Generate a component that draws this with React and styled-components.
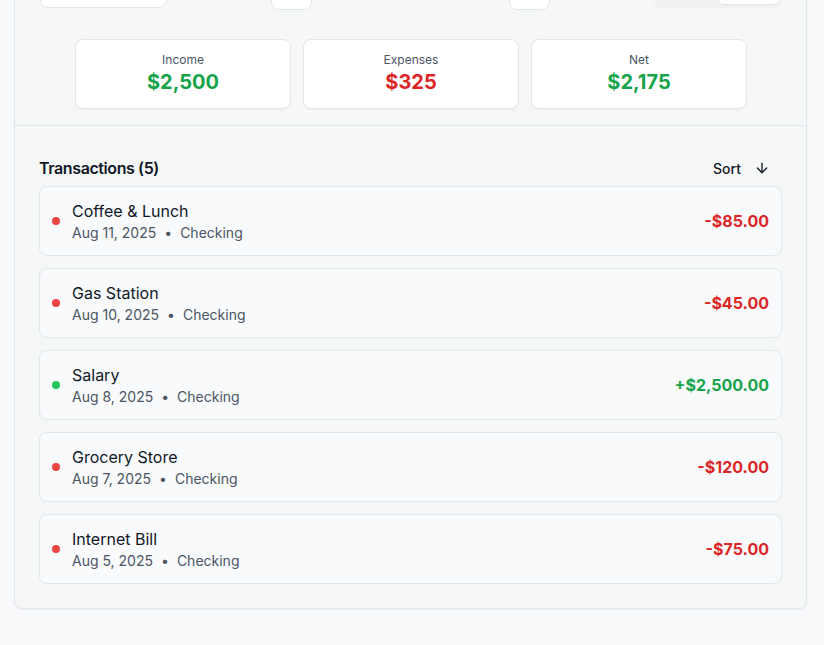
import React from "react";
import styled, { createGlobalStyle } from "styled-components";
import { ArrowDown, ChevronLeft, ChevronRight, ChevronDown } from "lucide-react";

const Global = createGlobalStyle`
  html, body { margin: 0; padding: 0; background: #f8f9fb; }
  body { font-family: Inter, "Noto Sans", sans-serif; color: #111827; }
  * { box-sizing: border-box; }
`;

const Page = styled.div`
  padding: 0 17px 40px 14px;
  margin-top: -55px;
`;

const Card = styled.div`
  background: #f6f7f7;
  border: 1px solid #e2e6ee;
  border-radius: 8px;
  box-shadow: 0 1px 2px rgba(15, 23, 42, 0.05);
`;

const Header = styled.div`
  padding: 24px 24px 16px 25px;
  border-bottom: 1px solid #e2e6ee;
`;

const Toolbar = styled.div`
  display: flex;
  align-items: center;
  justify-content: space-between;
  height: 40px;
`;

const Select = styled.div`
  width: 127px;
  height: 36px;
  background: #fff;
  border: 1px solid #e2e6ee;
  border-radius: 8px;
  display: flex;
  align-items: center;
  justify-content: flex-end;
  padding: 0 10px;
`;

const Nav = styled.div`
  display: flex;
  align-items: center;
  gap: 12px;
`;

const IconButton = styled.button`
  width: 41px;
  height: 40px;
  background: #fff;
  border: 1px solid #e2e6ee;
  border-radius: 8px;
  display: flex;
  align-items: center;
  justify-content: center;
  color: #111827;
  padding: 0;
`;

const MonthLabel = styled.div`
  width: 173px;
  text-align: center;
  font-size: 16px;
  line-height: 24px;
  font-weight: 600;
`;

const Segmented = styled.div`
  display: flex;
  height: 36px;
  padding: 4px 3px;
  background: #f0f1f3;
  border-radius: 8px;
`;

const Segment = styled.div`
  width: 61px;
  border-radius: 6px;
  background: ${(p) => (p.$active ? "#fff" : "transparent")};
  box-shadow: ${(p) => (p.$active ? "0 1px 2px rgba(0,0,0,0.06)" : "none")};
`;

const Stats = styled.div`
  display: grid;
  grid-template-columns: repeat(3, 1fr);
  gap: 12px;
  max-width: 672px;
  margin: 29px auto 0;
`;

const StatCard = styled.div`
  background: #fff;
  border: 1px solid #e5e7eb;
  border-radius: 8px;
  padding: 12px;
  text-align: center;
  box-shadow: 0 1px 2px rgba(15, 23, 42, 0.04);
`;

const StatLabel = styled.div`
  font-size: 12px;
  line-height: 16px;
  color: #4b5563;
`;

const StatValue = styled.div`
  font-size: 20px;
  line-height: 28px;
  font-weight: 700;
  color: ${(p) => p.$color};
`;

const Body = styled.div`
  padding: 24px;
`;

const ListHeader = styled.div`
  display: flex;
  align-items: center;
  justify-content: space-between;
  height: 36px;
`;

const Title = styled.h2`
  margin: 0;
  font-size: 16px;
  font-weight: 600;
  letter-spacing: -0.4px;
  color: #111827;
`;

const SortButton = styled.button`
  display: flex;
  align-items: center;
  gap: 13px;
  background: transparent;
  border: none;
  padding: 0 12px;
  height: 32px;
  font-family: inherit;
  font-size: 14px;
  font-weight: 500;
  color: #111827;
`;

const List = styled.div`
  display: flex;
  flex-direction: column;
  gap: 12px;
`;

const Row = styled.div`
  display: flex;
  align-items: center;
  gap: 12px;
  padding: 12px;
  background: #f8fafc;
  border: 1px solid #e2e6ee;
  border-radius: 8px;
`;

const Dot = styled.span`
  width: 8px;
  height: 8px;
  border-radius: 50%;
  background: ${(p) => p.$color};
  flex: none;
`;

const Info = styled.div`
  flex: 1;
  min-width: 0;
`;

const Name = styled.div`
  font-size: 16px;
  line-height: 24px;
  color: #111827;
`;

const Meta = styled.div`
  display: flex;
  gap: 8px;
  font-size: 14px;
  line-height: 20px;
  color: #4b5563;
`;

const Amount = styled.div`
  font-size: 16px;
  font-weight: 700;
  color: ${(p) => p.$color};
`;

const GREEN = "#16a34a";
const RED = "#dc2626";

const transactions = [
  { name: "Coffee & Lunch", date: "Aug 11, 2025", amount: "-$85.00", income: false },
  { name: "Gas Station", date: "Aug 10, 2025", amount: "-$45.00", income: false },
  { name: "Salary", date: "Aug 8, 2025", amount: "+$2,500.00", income: true },
  { name: "Grocery Store", date: "Aug 7, 2025", amount: "-$120.00", income: false },
  { name: "Internet Bill", date: "Aug 5, 2025", amount: "-$75.00", income: false },
];

export default function App() {
  return (
    <>
      <Global />
      <Page>
        <Card>
          <Header>
            <Toolbar>
              <Select>
                <ChevronDown size={16} color="#6b7280" />
              </Select>
              <Nav>
                <IconButton aria-label="Previous month">
                  <ChevronLeft size={16} />
                </IconButton>
                <MonthLabel>August 2025</MonthLabel>
                <IconButton aria-label="Next month">
                  <ChevronRight size={16} />
                </IconButton>
              </Nav>
              <Segmented>
                <Segment aria-label="Week" />
                <Segment $active aria-label="Month" />
              </Segmented>
            </Toolbar>
            <Stats>
              <StatCard>
                <StatLabel>Income</StatLabel>
                <StatValue $color={GREEN}>$2,500</StatValue>
              </StatCard>
              <StatCard>
                <StatLabel>Expenses</StatLabel>
                <StatValue $color={RED}>$325</StatValue>
              </StatCard>
              <StatCard>
                <StatLabel>Net</StatLabel>
                <StatValue $color={GREEN}>$2,175</StatValue>
              </StatCard>
            </Stats>
          </Header>
          <Body>
            <ListHeader>
              <Title>Transactions (5)</Title>
              <SortButton>
                Sort
                <ArrowDown size={16} strokeWidth={2} />
              </SortButton>
            </ListHeader>
            <List>
              {transactions.map((t) => (
                <Row key={t.name}>
                  <Dot $color={t.income ? "#22c55e" : "#ef4444"} />
                  <Info>
                    <Name>{t.name}</Name>
                    <Meta>
                      <span>{t.date}</span>
                      <span>•</span>
                      <span>Checking</span>
                    </Meta>
                  </Info>
                  <Amount $color={t.income ? GREEN : RED}>{t.amount}</Amount>
                </Row>
              ))}
            </List>
          </Body>
        </Card>
      </Page>
    </>
  );
}
